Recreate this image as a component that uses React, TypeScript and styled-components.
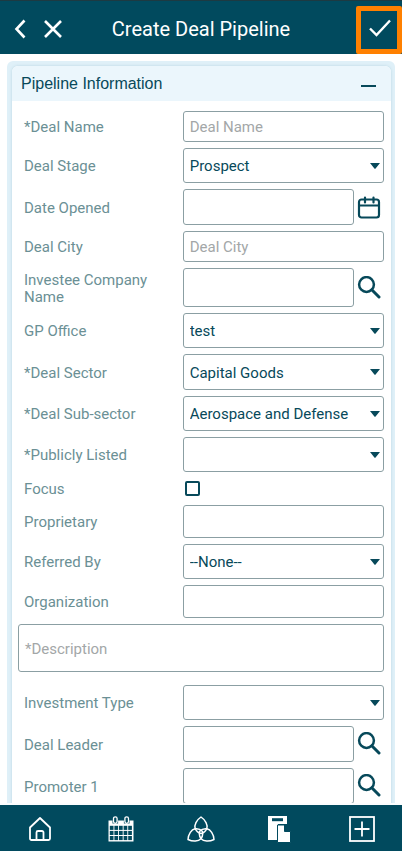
import React, { useId } from "react";
import styled, { createGlobalStyle } from "styled-components";

const teal = "#014a5e";
const ink = "#07495a";

const GlobalStyle = createGlobalStyle`
  *, *::before, *::after { box-sizing: border-box; }
  html, body { margin: 0; padding: 0; }
  body { background: #fbfdfe; font-family: Roboto, "Liberation Sans", sans-serif; }
  button, input, select, textarea { font: inherit; color: inherit; margin: 0; }
`;

const Screen = styled.div`
  display: grid;
  grid-template-rows: auto 1fr auto;
  height: 100vh;
  color: ${ink};
  background: #fbfdfe;
`;

const TopBar = styled.header`
  display: grid;
  grid-template-columns: 1fr auto 1fr;
  align-items: stretch;
  height: 54px;
  background: ${teal};
  border-top: 1px solid #1d3a42;
  color: #ffffff;
`;

const BarActions = styled.div`
  display: flex;
  align-items: center;
  padding: 2px 0 0 8px;
`;

const Title = styled.h1`
  margin: 0;
  padding-top: 2px;
  align-self: center;
  font-size: 20px;
  line-height: 24px;
  font-weight: 400;
  white-space: nowrap;
`;

const IconButton = styled.button<{ $width: number }>`
  display: flex;
  align-items: center;
  justify-content: center;
  flex: none;
  width: ${(p) => p.$width}px;
  padding: 0;
  border: 0;
  background: none;
  cursor: pointer;
`;

const SaveButton = styled.button`
  display: flex;
  align-items: center;
  justify-content: center;
  justify-self: end;
  width: 46px;
  margin: 5px 0 0;
  padding: 0 0 4px 2px;
  border: 5px solid #ff8000;
  border-radius: 2px;
  background: none;
  cursor: pointer;
`;

const Content = styled.main`
  min-height: 0;
  margin-bottom: 2px;
  padding: 7px 7px 0;
  overflow-y: auto;
  scrollbar-width: none;
  background: #ffffff;
`;

const Panel = styled.section`
  padding: 5px 4px 5px 5px;
  border-radius: 6px 6px 0 0;
  background: #dff0f8;
`;

const PanelBody = styled.div`
  border-radius: 6px;
  overflow: hidden;
  background: #ffffff;
  box-shadow: 0 0 3px #b9d5e2;
`;

const PanelHeader = styled.div`
  display: flex;
  align-items: center;
  justify-content: space-between;
  height: 35px;
  padding: 0 15px 0 9px;
  background: #ebf6fc;
`;

const PanelTitle = styled.h2`
  margin: 0;
  font-family: "Liberation Sans", Arial, sans-serif;
  font-size: 16px;
  line-height: 20px;
  font-weight: 400;
`;

const Form = styled.form`
  display: flex;
  flex-direction: column;
  gap: 6px;
  padding: 10px 7px 10px 6px;
  font-size: 15px;
  line-height: 17px;
`;

const Row = styled.div<{ $height: number }>`
  display: grid;
  grid-template-columns: 9fr 11fr;
  min-height: ${(p) => p.$height}px;
`;

const Label = styled.label`
  align-self: center;
  padding: 2px 24px 0 6px;
  color: #6b9095;
`;

const ControlGroup = styled.div`
  display: flex;
  align-items: stretch;
  position: relative;
  min-width: 0;
`;

const TextInput = styled.input`
  flex: 1;
  width: 100%;
  min-width: 0;
  padding: 2px 6px 0;
  border: 1px solid #8b9fa3;
  border-radius: 3px;
  background: #ffffff;
  &::placeholder { color: #a3a7a8; opacity: 1; }
`;

const Select = styled.select`
  flex: 1;
  width: 100%;
  min-width: 0;
  padding: 2px 24px 0 6px;
  border: 1px solid #8b9fa3;
  border-radius: 3px;
  background: #ffffff;
  appearance: none;
`;

const Caret = styled.svg`
  position: absolute;
  top: 50%;
  right: 4px;
  margin-top: -3px;
  pointer-events: none;
`;

const CheckBox = styled.input`
  appearance: none;
  align-self: center;
  width: 15px;
  height: 15px;
  margin-left: 2px;
  border: 2px solid ${ink};
  border-radius: 2px;
  background: #ffffff;
  &:checked { background: ${ink}; }
`;

const Description = styled.textarea`
  display: block;
  width: 100%;
  height: 48px;
  margin-bottom: 7px;
  padding: 16px 6px 14px;
  border: 1px solid #8b9fa3;
  border-radius: 3px;
  background: #ffffff;
  resize: none;
  overflow: hidden;
  &::placeholder { color: #a3a7a8; opacity: 1; }
`;

const BottomNav = styled.nav`
  display: grid;
  grid-template-columns: repeat(5, 1fr);
  height: 46px;
  background: ${teal};
`;

const NavLink = styled.a`
  display: flex;
  align-items: center;
  justify-content: center;
  padding-top: 2px;
  color: #ffffff;
`;

const SearchIcon = () => (
  <svg width="24" height="24" viewBox="0 0 24 24" fill="none" stroke={ink}>
    <circle cx="9.5" cy="8.5" r="7.4" strokeWidth="2.5" />
    <path d="M14.8 13.8 22 21" strokeWidth="3" strokeLinecap="round" />
  </svg>
);

const DateIcon = () => (
  <svg width="24" height="24" viewBox="0 0 24 24" fill="none" stroke={ink} strokeWidth="2.2">
    <rect x="2" y="4.5" width="20" height="18" rx="2.5" />
    <path d="M2 10.5h20" strokeWidth="1.8" />
    <path d="M8 2.5v5M16.5 2.5v5" strokeLinecap="round" />
  </svg>
);

const HomeIcon = () => (
  <svg width="24" height="26" viewBox="0 0 24 26" fill="none" stroke="currentColor" strokeWidth="1.8" strokeLinejoin="round">
    <path d="M2 11.5 12 2l10 9.5V22.5a1.5 1.5 0 0 1-1.5 1.5h-17A1.5 1.5 0 0 1 2 22.5Z" />
    <path d="M8.5 24v-7.5a1.5 1.5 0 0 1 1.5-1.5h4a1.5 1.5 0 0 1 1.5 1.5V24" />
  </svg>
);

const MonthIcon = () => (
  <svg width="26" height="26" viewBox="0 0 26 26" fill="none">
    <path d="M.5 4.5h25v21H.5Z" fill="currentColor" />
    <g fill={teal}>
      {[9.8, 14.9, 20].map((y) =>
        [1.8, 6.4, 11, 15.6, 20.2].map((x) => (
          <rect key={`${x}-${y}`} x={x} y={y} width="3.7" height="4.1" />
        ))
      )}
    </g>
    <path d="M4.5 4h5.6v3.500H4.5ZM15.9 4h5.6v3.500h-5.6Z" fill={teal} />
    <g fill={teal} stroke="currentColor" strokeWidth="1.3">
      <rect x="5.5" y=".8" width="3.6" height="6.6" rx="1.8" />
      <rect x="16.9" y=".8" width="3.6" height="6.6" rx="1.8" />
    </g>
  </svg>
);

const petal =
  "M13 1C17.5 4 20 9 18.8 12.5 17.5 15.5 15.5 17 13 17.5 10.5 17 8.5 15.5 7.2 12.5 6 9 8.5 4 13 1Z";

const KnotIcon = () => (
  <svg width="28" height="26" viewBox="-1 0 28 26" fill="none" stroke="currentColor" strokeWidth="1.5" strokeLinejoin="round">
    {[0, 120, 240].map((angle) => (
      <path key={angle} d={petal} transform={`rotate(${angle} 13 16)`} />
    ))}
  </svg>
);

const DocsIcon = () => (
  <svg width="28" height="28" viewBox="0 0 28 28">
    <path d="M1 1h19v8h-9v16H1Z" fill="currentColor" />
    <path d="M5 3.2h11v3H5Z" fill={teal} />
    <path d="M10.5 10h7v6.500H23.5V27.500h-13Z" fill="currentColor" stroke={teal} strokeWidth="1" />
  </svg>
);

const AddIcon = () => (
  <svg width="26" height="26" viewBox="0 0 26 26" fill="none" stroke="currentColor">
    <rect x="1" y="1" width="24" height="24" strokeWidth="1.8" />
    <path d="M13 5.5v15M5.5 13h15" strokeWidth="1.8" />
  </svg>
);

type FieldProps = {
  label: string;
  kind: "text" | "select" | "date" | "lookup" | "check";
  value?: string;
  placeholder?: string;
  height?: number;
};

const rowHeight = { text: 33, select: 35, date: 36, lookup: 36, check: 21 };

function Field({ label, kind, value = "", placeholder, height }: FieldProps) {
  const id = useId();
  return (
    <Row $height={height ?? (placeholder ? 31 : rowHeight[kind])}>
      <Label htmlFor={id}>{label}</Label>
      <ControlGroup>
        {kind === "check" && <CheckBox id={id} type="checkbox" />}
        {kind === "select" && (
          <>
            <Select id={id} defaultValue={value}>
              <option value={value}>{value}</option>
            </Select>
            <Caret width="10" height="6" viewBox="0 0 10 6">
              <path d="M0 0h10L5.8 5.2a1 1 0 0 1-1.6 0Z" fill={ink} />
            </Caret>
          </>
        )}
        {(kind === "text" || kind === "date" || kind === "lookup") && (
          <TextInput id={id} type="text" placeholder={placeholder} defaultValue={value} />
        )}
        {(kind === "date" || kind === "lookup") && (
          <IconButton type="button" $width={30} aria-label={`Choose ${label}`}>
            {kind === "date" ? <DateIcon /> : <SearchIcon />}
          </IconButton>
        )}
      </ControlGroup>
    </Row>
  );
}

export default function App() {
  return (
    <Screen>
      <GlobalStyle />
      <TopBar>
        <BarActions>
          <IconButton type="button" $width={24} aria-label="Back">
            <svg width="12" height="20" viewBox="0 0 12 20" fill="none" stroke="#fff" strokeWidth="2.6">
              <path d="M10.5 1.5 2.5 10l8 8.5" />
            </svg>
          </IconButton>
          <IconButton type="button" $width={42} aria-label="Close">
            <svg width="18" height="18" viewBox="0 0 18 18" fill="none" stroke="#fff" strokeWidth="2.6">
              <path d="m1 1 16 16M17 1 1 17" />
            </svg>
          </IconButton>
        </BarActions>
        <Title>Create Deal Pipeline</Title>
        <SaveButton type="button" aria-label="Save">
          <svg width="22" height="18" viewBox="0 0 22 18" fill="none" stroke="#fff" strokeWidth="2.4">
            <path d="m1 9.5 6.5 6.5L21 1.5" />
          </svg>
        </SaveButton>
      </TopBar>
      <Content>
        <Panel>
          <PanelBody>
            <PanelHeader>
              <PanelTitle>Pipeline Information</PanelTitle>
              <IconButton type="button" $width={15} aria-label="Collapse section">
                <svg width="15" height="20" viewBox="0 0 15 20">
                  <path d="M0 12h15" stroke={ink} strokeWidth="2" />
                </svg>
              </IconButton>
            </PanelHeader>
            <Form onSubmit={(e) => e.preventDefault()}>
              <Field label="*Deal Name" kind="text" placeholder="Deal Name" />
              <Field label="Deal Stage" kind="select" value="Prospect" />
              <Field label="Date Opened" kind="date" />
              <Field label="Deal City" kind="text" placeholder="Deal City" />
              <Field label="Investee Company Name" kind="lookup" height={39} />
              <Field label="GP Office" kind="select" value="test" />
              <Field label="*Deal Sector" kind="select" value="Capital Goods" height={36} />
              <Field label="*Deal Sub-sector" kind="select" value="Aerospace and Defense" />
              <Field label="*Publicly Listed" kind="select" />
              <Field label="Focus" kind="check" />
              <Field label="Proprietary" kind="text" />
              <Field label="Referred By" kind="select" value="--None--" />
              <Field label="Organization" kind="text" />
              <Description aria-label="Description" placeholder="*Description" />
              <Field label="Investment Type" kind="select" />
              <Field label="Deal Leader" kind="lookup" />
              <Field label="Promoter 1" kind="lookup" />
            </Form>
          </PanelBody>
        </Panel>
      </Content>
      <BottomNav>
        <NavLink href="#home" aria-label="Home"><HomeIcon /></NavLink>
        <NavLink href="#calendar" aria-label="Calendar"><MonthIcon /></NavLink>
        <NavLink href="#network" aria-label="Network"><KnotIcon /></NavLink>
        <NavLink href="#documents" aria-label="Documents"><DocsIcon /></NavLink>
        <NavLink href="#add" aria-label="Add"><AddIcon /></NavLink>
      </BottomNav>
    </Screen>
  );
}
